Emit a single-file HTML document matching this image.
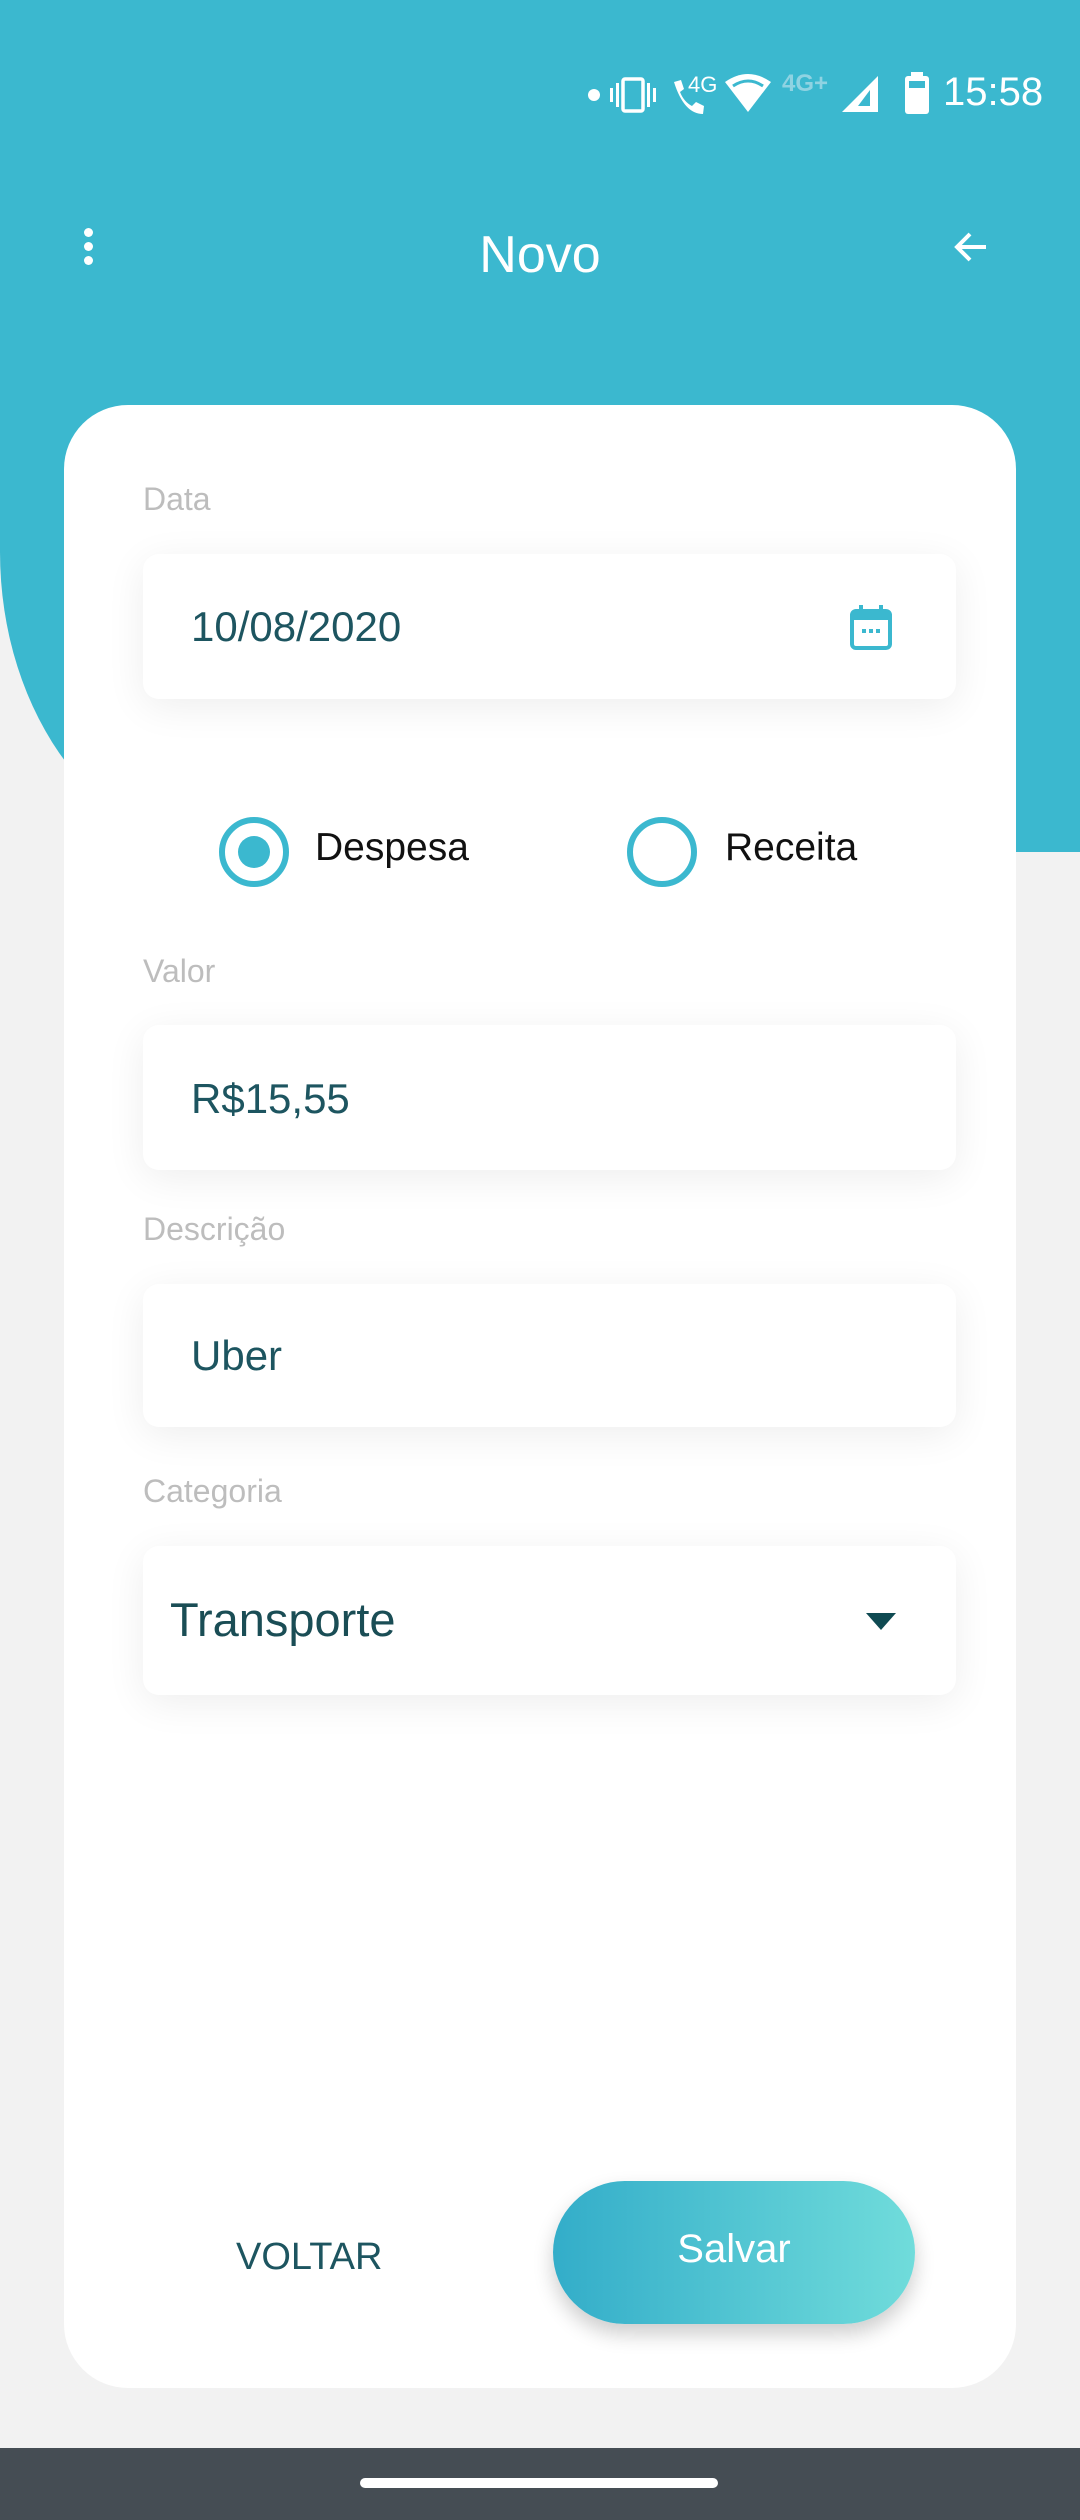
<!DOCTYPE html>
<html><head><meta charset="utf-8"><style>
*{margin:0;padding:0;box-sizing:border-box}
body{width:1080px;height:2520px;background:#f2f2f2;font-family:"Liberation Sans",sans-serif;position:relative;overflow:hidden}
.abs{position:absolute}
.teal{left:0;top:0;width:1080px;height:852px;background:#3bb8cf;border-bottom-left-radius:230px 300px}
.card{left:64px;top:405px;width:952px;height:1983px;background:#fff;border-radius:64px}
.lbl{left:143px;font-size:32px;color:#bdbdbd}
.inp{left:143px;width:813px;background:#fff;border-radius:16px;box-shadow:0 8px 40px rgba(0,0,0,0.07)}
.val{left:191px;font-size:42px;color:#1d5560;line-height:1}
.radio{width:70px;height:70px;border:6px solid #3bb8cf;border-radius:50%}
.rl{font-size:39px;color:#111;line-height:1}
</style></head><body>
<div class="abs teal"></div>
<!-- status bar -->
<div class="abs" style="left:588px;top:89px;width:12px;height:12px;border-radius:50%;background:#fff"></div>
<svg class="abs" style="left:610px;top:76px" width="50" height="38" viewBox="0 0 50 38"><rect x="0" y="12" width="3" height="14" fill="#fff"/><rect x="6" y="7" width="3" height="24" fill="#fff"/><rect x="13" y="3" width="20" height="32" rx="2" fill="none" stroke="#fff" stroke-width="3.5"/><rect x="37" y="7" width="3" height="24" fill="#fff"/><rect x="43" y="12" width="3" height="14" fill="#fff"/></svg>
<svg class="abs" style="left:670px;top:76px" width="36" height="42" viewBox="0 0 36 42"><path d="M4 6 L11 4 L14 13 L10 16 Q14 26 22 30 L26 26 L34 30 L33 38 Q14 38 4 6Z" fill="#fff"/></svg>
<div class="abs" style="left:688px;top:72px;font-size:22px;color:#fff">4G</div>
<svg class="abs" style="left:725px;top:72px" width="46" height="42" viewBox="0 0 46 42"><path d="M0 10 Q23 -6 46 10 L23 40Z" fill="#fff"/><path d="M8 14 Q23 4 38 14" stroke="#3bb8cf" stroke-width="3" fill="none"/></svg>
<div class="abs" style="left:782px;top:70px;font-size:24px;color:#8fd3e2;font-weight:bold">4G+</div>
<svg class="abs" style="left:840px;top:74px" width="40" height="40" viewBox="0 0 40 40"><path d="M38 2 L38 38 L2 38Z" fill="#fff"/><path d="M30 16 L30 32 L18 32Z" fill="#3bb8cf"/></svg>
<svg class="abs" style="left:904px;top:72px" width="26" height="42" viewBox="0 0 26 42"><rect x="7" y="0" width="12" height="5" fill="#fff"/><rect x="1" y="4" width="24" height="38" rx="3" fill="#fff"/><rect x="5" y="9" width="16" height="7" fill="#3bb8cf"/></svg>
<div class="abs" style="left:943px;top:70px;font-size:40px;color:#fff">15:58</div>
<!-- app bar -->
<div class="abs" style="left:84px;top:228px;width:9px;height:9px;border-radius:50%;background:#fff;box-shadow:0 14px 0 #fff,0 28px 0 #fff"></div>
<div class="abs" style="left:0;width:1080px;top:225px;text-align:center;font-size:52px;color:#fff">Novo</div>
<svg class="abs" style="left:952px;top:228px" width="38" height="38" viewBox="0 0 38 38"><path d="M34 19H6M18 6L5 19L18 32" stroke="#fff" stroke-width="4" fill="none"/></svg>
<div class="abs card"></div>
<div class="abs lbl" style="top:481px">Data</div>
<div class="abs inp" style="top:554px;height:145px"></div>
<div class="abs val" style="top:606px">10/08/2020</div>
<svg class="abs" style="left:849px;top:605px" width="44" height="46" viewBox="0 0 44 46"><rect x="3" y="6" width="38" height="37" rx="4" fill="none" stroke="#3bb8cf" stroke-width="4"/><rect x="3" y="6" width="38" height="9" fill="#3bb8cf"/><rect x="10" y="0" width="4" height="8" fill="#3bb8cf"/><rect x="30" y="0" width="4" height="8" fill="#3bb8cf"/><rect x="13" y="24" width="4" height="4" fill="#3bb8cf"/><rect x="20" y="24" width="4" height="4" fill="#3bb8cf"/><rect x="27" y="24" width="4" height="4" fill="#3bb8cf"/></svg>
<div class="abs radio" style="left:219px;top:817px"><div style="position:absolute;left:13px;top:13px;width:32px;height:32px;border-radius:50%;background:#3bb8cf"></div></div>
<div class="abs rl" style="left:315px;top:828px">Despesa</div>
<div class="abs radio" style="left:627px;top:817px"></div>
<div class="abs rl" style="left:725px;top:828px">Receita</div>
<div class="abs lbl" style="top:953px">Valor</div>
<div class="abs inp" style="top:1025px;height:145px"></div>
<div class="abs val" style="top:1078px">R$15,55</div>
<div class="abs lbl" style="top:1211px">Descrição</div>
<div class="abs inp" style="top:1284px;height:143px"></div>
<div class="abs val" style="top:1335px">Uber</div>
<div class="abs lbl" style="top:1473px">Categoria</div>
<div class="abs inp" style="top:1546px;height:149px"></div>
<div class="abs" style="left:170px;top:1596px;font-size:47px;color:#1a4d55;line-height:1">Transporte</div>
<svg class="abs" style="left:866px;top:1613px" width="30" height="18" viewBox="0 0 30 18"><path d="M0 0H30L15 17Z" fill="#0f4a52"/></svg>
<div class="abs" style="left:236px;top:2236px;font-size:38px;color:#1d5560">VOLTAR</div>
<div class="abs" style="left:553px;top:2181px;width:362px;height:143px;border-radius:72px;background:linear-gradient(90deg,#33adc9,#70dcdb);box-shadow:0 10px 20px rgba(0,0,0,0.2);color:#fff;font-size:40px;text-align:center;line-height:137px">Salvar</div>
<div class="abs" style="left:0;top:2448px;width:1080px;height:72px;background:#454d54"></div>
<div class="abs" style="left:360px;top:2478px;width:358px;height:10px;border-radius:5px;background:#fff"></div>
</body></html>
